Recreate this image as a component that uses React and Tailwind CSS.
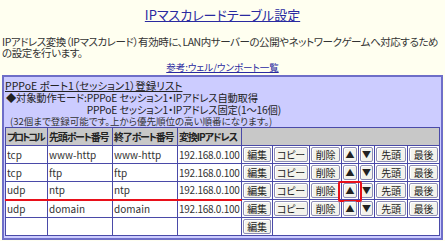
import React from "react";

const rows = [
  { p: "tcp", s: "www-http", e: "www-http", ip: "192.168.0.100" },
  { p: "tcp", s: "ftp", e: "ftp", ip: "192.168.0.100" },
  { p: "udp", s: "ntp", e: "ntp", ip: "192.168.0.100", mark: true },
  { p: "udp", s: "domain", e: "domain", ip: "192.168.0.100" },
];

function Btn({ children, tri }) {
  return (
    <div
      className={
        "h-[15px] w-full flex items-center justify-center border border-[#8c8cb4] bg-[#f3f3ec] rounded-[2px] shadow-[inset_1px_1px_0_#ffffff] text-[#222] leading-none " +
        (tri ? "text-[9px]" : "text-[10px] tracking-[-0.2px]")
      }
    >
      {children}
    </div>
  );
}

export default function App() {
  const cell = "border border-[#4a4aa8] px-[1px] align-middle whitespace-nowrap overflow-hidden";
  const bcell = "border border-[#4a4aa8] p-[1px] align-middle";
  const hcell = "border border-[#4a4aa8] pl-[1px] pr-0 align-middle whitespace-nowrap overflow-hidden font-bold text-left";
  return (
    <div className="w-[445px] h-[241px] overflow-hidden bg-[#fffff0] text-[#333] font-['Noto_Sans_CJK_JP',sans-serif] [font-feature-settings:'palt']">
      <div className="h-[26px] text-center leading-[26px]">
        <span className="text-[13px] underline text-[#2a2aa0]">IPマスカレードテーブル設定</span>
      </div>
      <div className="mt-[10px] px-[2px] text-[10.5px] leading-[11px] tracking-[-0.45px] whitespace-nowrap">
        <div>IPアドレス変換（IPマスカレード）有効時に、LAN内サーバーの公開やネットワークゲームへ対応するため</div>
        <div>の設定を行います。</div>
      </div>
      <div className="mt-[3px] text-center text-[9.5px] leading-[12px]">
        <span className="underline text-[#2a2aa0]">参考:ウェル/ウンポート一覧</span>
      </div>
      <div className="mt-[2px] ml-[2px] w-[441px] border-2 border-[#6e6ec8] bg-[#ccccff] pl-[1px] pr-[2px] pb-[2px] text-[10.5px] text-[#222]">
        <div className="pt-[2px] leading-[13px] underline">PPPoE ポート1（セッション1）登録リスト</div>
        <div className="flex pl-[1px] text-[10.3px] leading-[11.5px] tracking-[-0.2px]">
          <div>◆対象動作モード:</div>
          <div>
            <div>PPPoE セッション1・IPアドレス自動取得</div>
            <div>PPPoE セッション1・IPアドレス固定(1～16個)</div>
          </div>
        </div>
        <div className="pl-[5px] text-[9.5px] leading-[12px] text-[#333]">(32個まで登録可能です。上から優先順位の高い順番になります。)</div>
        <table className="table-fixed border-collapse w-[434px] bg-white text-[10px] leading-[12px] text-[#333]">
          <colgroup>
            <col className="w-[42px]" />
            <col className="w-[65px]" />
            <col className="w-[65px]" />
            <col className="w-[64px]" />
            <col className="w-[31px]" />
            <col className="w-[37px]" />
            <col className="w-[32px]" />
            <col className="w-[17px]" />
            <col className="w-[16px]" />
            <col className="w-[33px]" />
            <col className="w-[32px]" />
          </colgroup>
          <thead>
            <tr className="h-[18px] bg-[#c8c8c8] text-[#222]">
              <th className={hcell + " tracking-[-2.2px]"}>プロトコル</th>
              <th className={hcell + " tracking-[-1.2px]"}>先頭ポート番号</th>
              <th className={hcell + " tracking-[-1.2px]"}>終了ポート番号</th>
              <th className={hcell + " tracking-[-1.1px]"}>変換IPアドレス</th>
              <th className={cell} colSpan={7}></th>
            </tr>
          </thead>
          <tbody>
            {rows.map((r, i) => {
              const dc = cell + (r.mark ? " border-b-2 border-b-[#e8101a]" : "");
              return (
                <tr key={i} className="h-[18px]">
                  <td className={dc}>{r.p}</td>
                  <td className={dc}>{r.s}</td>
                  <td className={dc}>{r.e}</td>
                  <td className={dc + " tracking-[-0.25px]"}>{r.ip}</td>
                  <td className={bcell}><Btn>編集</Btn></td>
                  <td className={bcell}><Btn>コピー</Btn></td>
                  <td className={bcell}><Btn>削除</Btn></td>
                  <td className={bcell + " relative"}>
                    <Btn tri>▲</Btn>
                    {r.mark && (
                      <div className="absolute -left-[4px] -right-[4px] -top-[1px] -bottom-[3px] border-2 border-[#e8101a] rounded-[2px]" />
                    )}
                  </td>
                  <td className={bcell}><Btn tri>▼</Btn></td>
                  <td className={bcell}><Btn>先頭</Btn></td>
                  <td className={bcell}><Btn>最後</Btn></td>
                </tr>
              );
            })}
            <tr className="h-[18px]">
              <td className={cell}></td>
              <td className={cell}></td>
              <td className={cell}></td>
              <td className={cell}></td>
              <td className={bcell}><Btn>編集</Btn></td>
              <td className={cell} colSpan={6}></td>
            </tr>
          </tbody>
        </table>
      </div>
    </div>
  );
}
